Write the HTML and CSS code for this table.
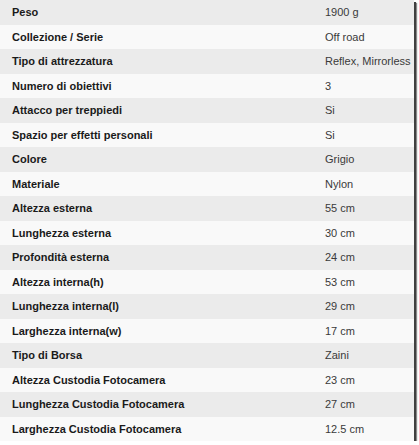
FILE: index.html
```html
<!DOCTYPE html>
<html lang="it">
<head>
<meta charset="utf-8">
<title>Specifiche</title>
<link rel="stylesheet" href="styles.css">
</head>
<body>
<div class="specs">
  <div class="row"><div class="label">Peso</div><div class="value">1900 g</div></div>
  <div class="row"><div class="label">Collezione / Serie</div><div class="value">Off road</div></div>
  <div class="row"><div class="label">Tipo di attrezzatura</div><div class="value">Reflex, Mirrorless</div></div>
  <div class="row"><div class="label">Numero di obiettivi</div><div class="value">3</div></div>
  <div class="row"><div class="label">Attacco per treppiedi</div><div class="value">Si</div></div>
  <div class="row"><div class="label">Spazio per effetti personali</div><div class="value">Si</div></div>
  <div class="row"><div class="label">Colore</div><div class="value">Grigio</div></div>
  <div class="row"><div class="label">Materiale</div><div class="value">Nylon</div></div>
  <div class="row"><div class="label">Altezza esterna</div><div class="value">55 cm</div></div>
  <div class="row"><div class="label">Lunghezza esterna</div><div class="value">30 cm</div></div>
  <div class="row"><div class="label">Profondità esterna</div><div class="value">24 cm</div></div>
  <div class="row"><div class="label">Altezza interna(h)</div><div class="value">53 cm</div></div>
  <div class="row"><div class="label">Lunghezza interna(l)</div><div class="value">29 cm</div></div>
  <div class="row"><div class="label">Larghezza interna(w)</div><div class="value">17 cm</div></div>
  <div class="row"><div class="label">Tipo di Borsa</div><div class="value">Zaini</div></div>
  <div class="row"><div class="label">Altezza Custodia Fotocamera</div><div class="value">23 cm</div></div>
  <div class="row"><div class="label">Lunghezza Custodia Fotocamera</div><div class="value">27 cm</div></div>
  <div class="row"><div class="label">Larghezza Custodia Fotocamera</div><div class="value">12.5 cm</div></div>
</div>
</body>
</html>
```

FILE: styles.css
```css
html, body {
  margin: 0;
  padding: 0;
  background: #ffffff;
}

.specs {
  width: 414px;
  box-shadow: 2px 2px 0 #404040, 3px 3px 1px rgba(60, 60, 60, 0.6);
  font-family: "Liberation Sans", Arial, sans-serif;
  font-size: 11px;
}

.row {
  display: grid;
  grid-template-columns: 313px 101px;
  height: 24.5px;
  align-items: center;
  background: #f9f9f9;
}

.row:nth-child(odd) {
  background: #ebebeb;
}

.label {
  padding-left: 12px;
  font-weight: bold;
  color: #1a1a1a;
  white-space: nowrap;
}

.value {
  padding-left: 12px;
  color: #3a3a3a;
  white-space: nowrap;
}
```
